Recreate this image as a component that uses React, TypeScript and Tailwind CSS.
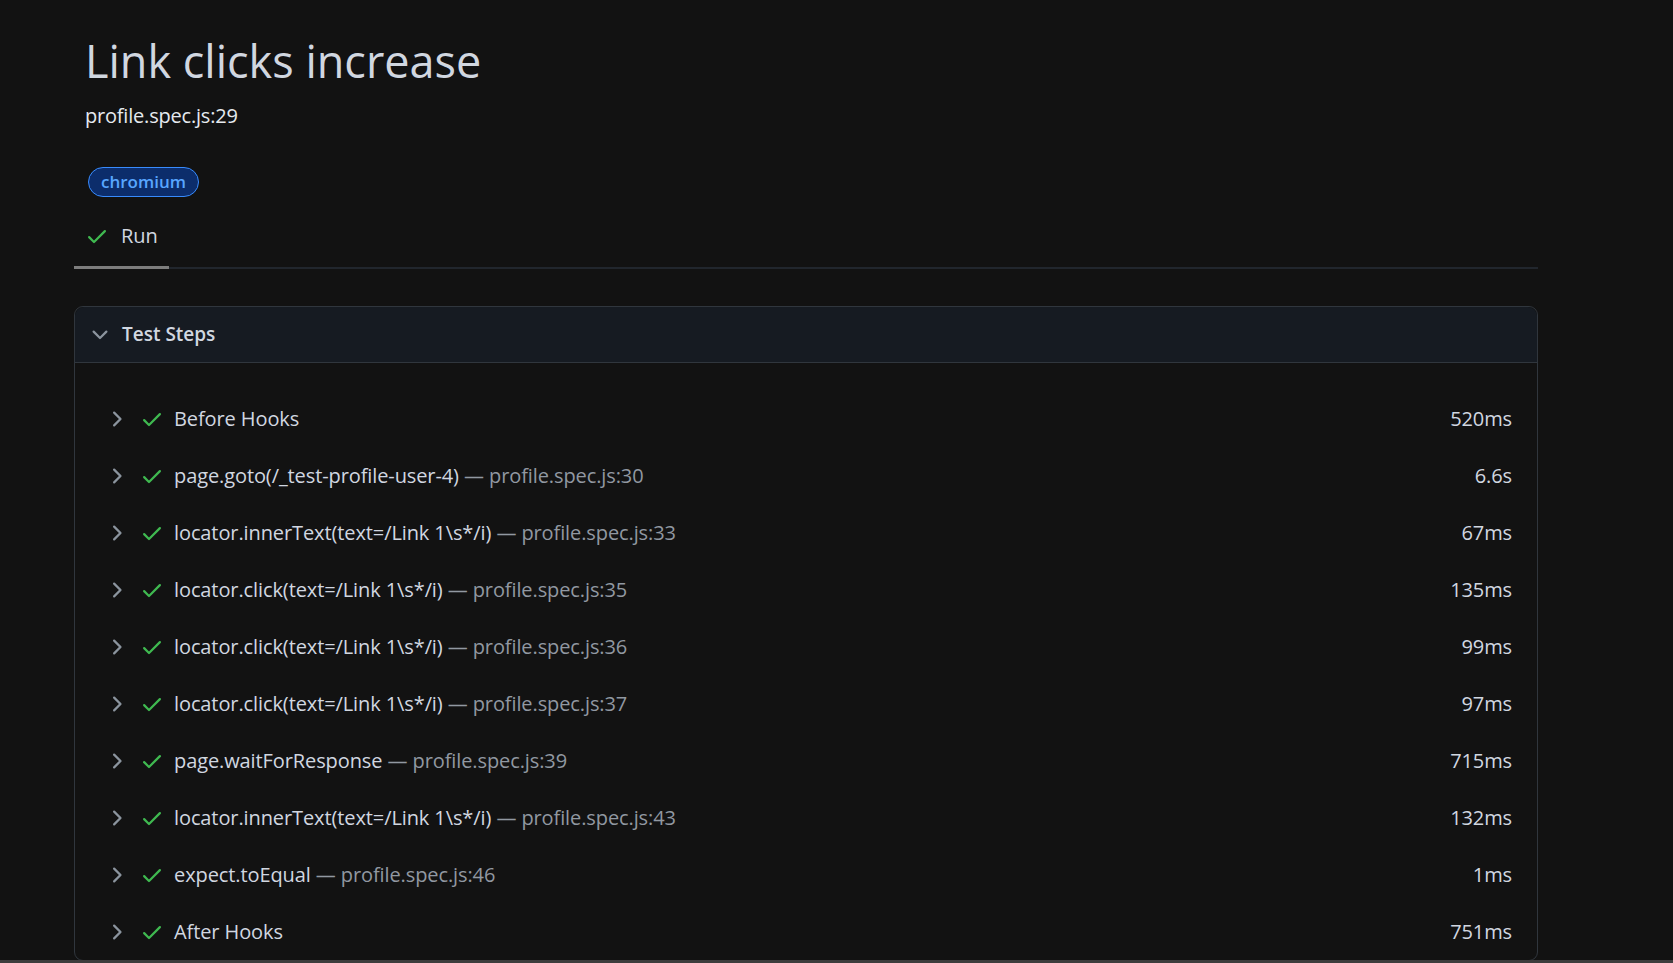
import React from "react";

type Step = { title: string; location?: string; duration: string };

const steps: Step[] = [
  { title: "Before Hooks", duration: "520ms" },
  { title: "page.goto(/_test-profile-user-4)", location: "profile.spec.js:30", duration: "6.6s" },
  { title: "locator.innerText(text=/Link 1\\s*/i)", location: "profile.spec.js:33", duration: "67ms" },
  { title: "locator.click(text=/Link 1\\s*/i)", location: "profile.spec.js:35", duration: "135ms" },
  { title: "locator.click(text=/Link 1\\s*/i)", location: "profile.spec.js:36", duration: "99ms" },
  { title: "locator.click(text=/Link 1\\s*/i)", location: "profile.spec.js:37", duration: "97ms" },
  { title: "page.waitForResponse", location: "profile.spec.js:39", duration: "715ms" },
  { title: "locator.innerText(text=/Link 1\\s*/i)", location: "profile.spec.js:43", duration: "132ms" },
  { title: "expect.toEqual", location: "profile.spec.js:46", duration: "1ms" },
  { title: "After Hooks", duration: "751ms" },
];

function CheckIcon() {
  return (
    <svg width="24" height="24" viewBox="0 0 16 16" fill="#3fb950" className="shrink-0">
      <path d="M13.78 4.22a.75.75 0 0 1 0 1.06l-7.25 7.25a.75.75 0 0 1-1.06 0L2.22 9.28a.751.751 0 0 1 .018-1.042.751.751 0 0 1 1.042-.018L6 10.94l6.72-6.72a.75.75 0 0 1 1.06 0Z" />
    </svg>
  );
}

function ChevronRight() {
  return (
    <svg width="24" height="24" viewBox="0 0 16 16" fill="#8b949e" className="shrink-0">
      <path d="M6.22 3.22a.75.75 0 0 1 1.06 0l4.25 4.25a.75.75 0 0 1 0 1.06l-4.25 4.25a.751.751 0 0 1-1.042-.018.751.751 0 0 1-.018-1.042L9.94 8 6.22 4.28a.75.75 0 0 1 0-1.06Z" />
    </svg>
  );
}

function ChevronDown() {
  return (
    <svg width="24" height="24" viewBox="0 0 16 16" fill="#8b949e" className="shrink-0">
      <path d="M12.78 5.22a.749.749 0 0 1 0 1.06l-4.25 4.25a.749.749 0 0 1-1.06 0L3.22 6.28a.749.749 0 1 1 1.06-1.06L8 8.94l3.72-3.72a.749.749 0 0 1 1.06 0Z" />
    </svg>
  );
}

export default function App() {
  return (
    <div className="flex h-[963px] w-[1673px] flex-col overflow-hidden bg-[#121212] font-['Open_Sans',sans-serif] text-[#d1d7e0]">
      <div className="flex-1 overflow-hidden">
        <div className="ml-[74px] w-[1464px]">
          {/* header */}
          <div className="pl-[11px] pt-[33px]">
            <h1 className="text-[45px] leading-[56px] font-normal text-[#d1d7e0]">Link clicks increase</h1>
            <div className="mt-[12px] text-[20px] leading-[30px] tracking-[-0.2px] text-[#e6eaef]">profile.spec.js:29</div>
            <div className="mt-[36px] flex pl-[3px]">
              <span className="flex h-[30px] items-center rounded-full border border-[#388bfd] bg-[#0c2d6b] px-[12px] text-[17px] font-semibold text-[#58a6ff]">
                chromium
              </span>
            </div>
          </div>

          {/* tabs */}
          <div className="mt-[9px] flex border-b-2 border-[#21262d]">
            <div className="-mb-[2px] flex h-[63px] items-center gap-[12px] border-b-[3px] border-[#7d7d7d] pl-[11px] pr-[11px]">
              <CheckIcon />
              <span className="text-[20px] leading-[30px]">Run</span>
            </div>
          </div>

          {/* test steps */}
          <div className="mt-[37px] rounded-[9px] border border-[#30363d]">
            <div className="flex h-[56px] items-center gap-[10px] rounded-t-[9px] border-b border-[#30363d] bg-[#161b22] pl-[13px]">
              <ChevronDown />
              <span className="text-[19px] font-semibold">Test Steps</span>
            </div>
            <div className="pt-[27px]">
              {steps.map((s, i) => (
                <div key={i} className="flex h-[57px] items-center pl-[29px] pr-[25px] text-[20px] leading-[30px] tracking-[-0.1px]">
                  <ChevronRight />
                  <div className="ml-[12px]">
                    <CheckIcon />
                  </div>
                  <div className="ml-[10px] flex-1 whitespace-nowrap">
                    {s.title}
                    {s.location && <span className="text-[#9198a1]"> — {s.location}</span>}
                  </div>
                  <div>{s.duration}</div>
                </div>
              ))}
            </div>
          </div>
        </div>
      </div>
      <div className="h-[3px] shrink-0 bg-[#3d3d3d]" />
    </div>
  );
}
